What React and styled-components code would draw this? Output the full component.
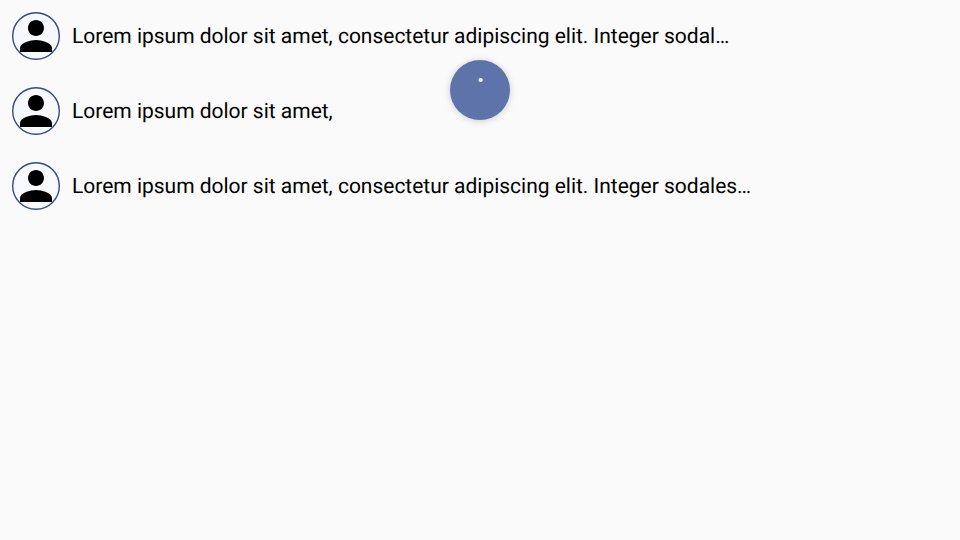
import React from "react";
import styled, { createGlobalStyle } from "styled-components";

const GlobalStyle = createGlobalStyle`
  body { margin: 0; background: #fafafa; }
`;
const Page = styled.main`
  position: relative;
  box-sizing: border-box;
  width: 960px;
  height: 540px;
  padding: 12px;
  background: #fafafa;
  overflow: hidden;
`;
const List = styled.ul`
  display: flex;
  flex-direction: column;
  gap: 27px;
  margin: 0;
  padding: 0;
  list-style: none;
`;
const Row = styled.li`
  display: flex;
  align-items: center;
  gap: 12px;
  height: 48px;
`;
const Avatar = styled.svg`
  flex: none;
  width: 48px;
  height: 48px;
`;
const Message = styled.span`
  padding-top: 2px;
  font: 400 21px/24px Roboto, sans-serif;
  letter-spacing: -0.015px;
  text-rendering: geometricPrecision;
  color: #000;
  white-space: nowrap;
`;
const Spinner = styled.div`
  position: absolute;
  left: 450px;
  top: 60px;
  display: flex;
  width: 60px;
  height: 60px;
  border-radius: 50%;
  background: #5e73aa;
  box-shadow: 0 1px 7px rgba(0, 0, 0, 0.18);
`;

const messages = [
  "Lorem ipsum dolor sit amet, consectetur adipiscing elit. Integer sodal…",
  "Lorem ipsum dolor sit amet,",
  "Lorem ipsum dolor sit amet, consectetur adipiscing elit. Integer sodales…",
];

export default function App() {
  return (
    <Page>
      <GlobalStyle />
      <List>
        {messages.map((text) => (
          <Row key={text}>
            <Avatar viewBox="0 0 48 48">
              <circle cx="24" cy="24" r="23.3" fill="#f8f8ff" stroke="#304a86" strokeWidth="1.4" />
              <path d="M24 24c4.42 0 8-3.58 8-8s-3.58-8-8-8-8 3.58-8 8 3.58 8 8 8zm0 4c-5.34 0-16 2.68-16 8v4h32v-4c0-5.32-10.66-8-16-8z" />
            </Avatar>
            <Message>{text}</Message>
          </Row>
        ))}
      </List>
      <Spinner>
        <svg width="60" height="60">
          <circle cx="30.6" cy="20" r="2.1" fill="#fff" />
        </svg>
      </Spinner>
    </Page>
  );
}
